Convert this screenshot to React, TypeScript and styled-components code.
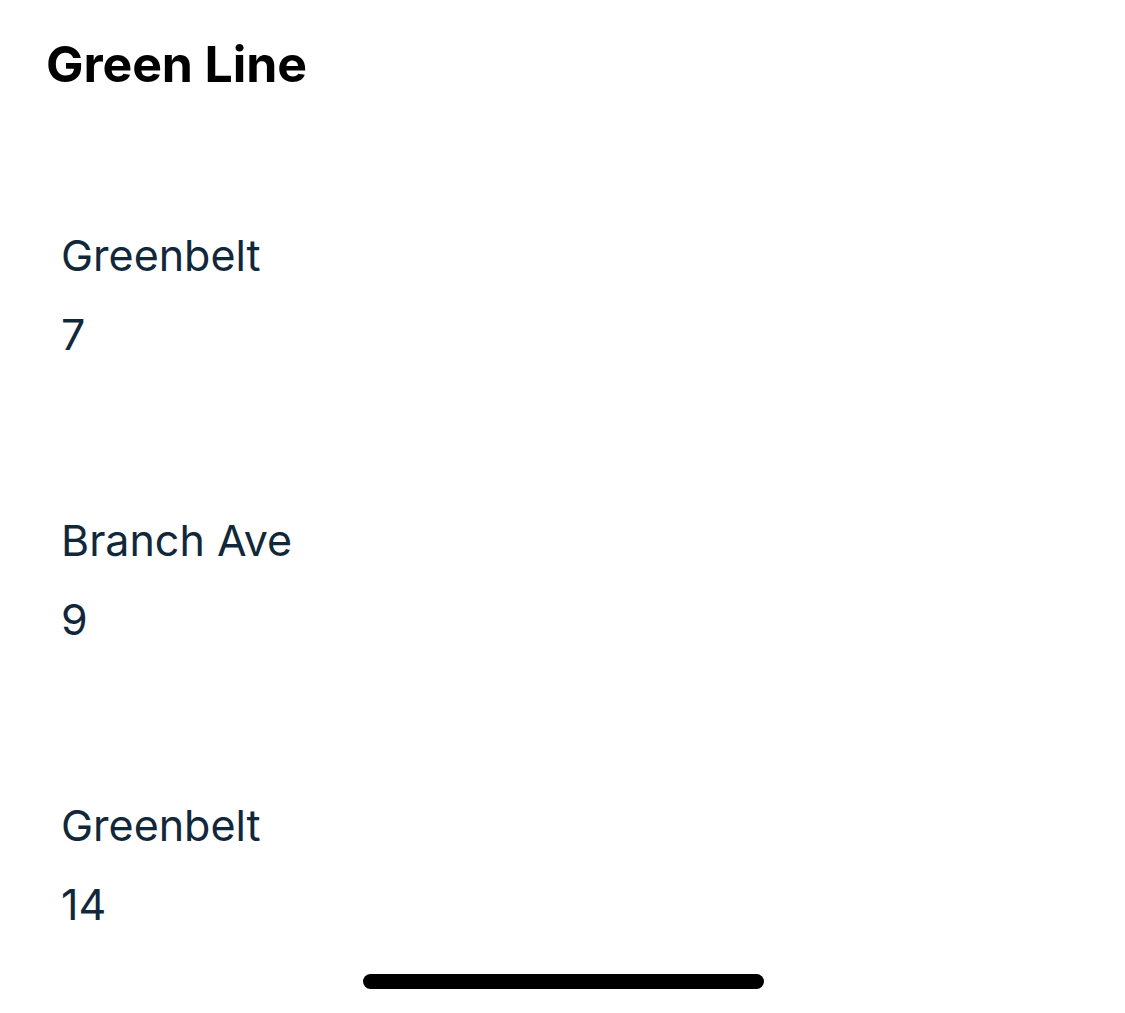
import styled, { createGlobalStyle } from 'styled-components';

const GlobalStyle = createGlobalStyle`
    html, body {
        margin: 0;
        padding: 0;
        background: #ffffff;
    }
    body {
        font-family: Inter, "Noto Sans", "Liberation Sans", sans-serif;
        -webkit-font-smoothing: antialiased;
    }
`;

const Screen = styled.div`
    min-height: 1013px;
    display: flex;
    flex-direction: column;
    background: #ffffff;
`;

const Header = styled.header`
    padding: 34px 46px 0;
`;

const Title = styled.h1`
    margin: 0;
    font-size: 50px;
    line-height: 60px;
    font-weight: 700;
    color: #000000;
    letter-spacing: -0.1px;
`;

const StopList = styled.ul`
    list-style: none;
    margin: 58px 0 0;
    padding: 0;
    display: flex;
    flex-direction: column;
`;

const Stop = styled.li`
    display: flex;
    flex-direction: column;
    gap: 27px;
    padding: 77px 61px;
`;

const StopText = styled.span`
    font-size: 43px;
    line-height: 52px;
    font-weight: 400;
    color: #11283a;
`;

const HomeIndicator = styled.div`
    position: fixed;
    left: 50%;
    bottom: 24px;
    width: 401px;
    height: 15px;
    margin-left: -200px;
    border-radius: 8px;
    background: #000000;
`;

const stops = [
    { name: 'Greenbelt', minutes: 7 },
    { name: 'Branch Ave', minutes: 9 },
    { name: 'Greenbelt', minutes: 14 },
];

export default function App() {
    return (
        <Screen>
            <GlobalStyle />
            <Header>
                <Title>Green Line</Title>
            </Header>
            <StopList>
                {stops.map((stop, i) => (
                    <Stop key={i}>
                        <StopText>{stop.name}</StopText>
                        <StopText>{stop.minutes}</StopText>
                    </Stop>
                ))}
            </StopList>
            <HomeIndicator />
        </Screen>
    );
}
